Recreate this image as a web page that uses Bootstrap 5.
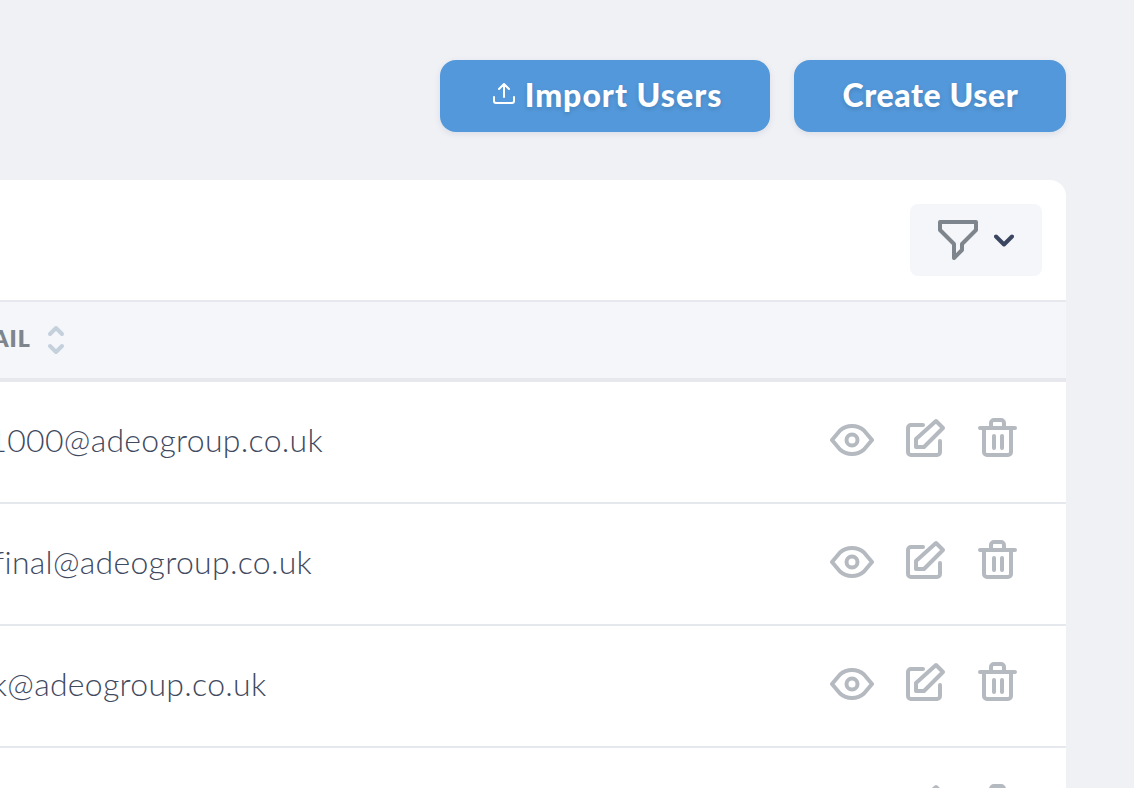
<!DOCTYPE html>
<html lang="en">
<head>
<meta charset="utf-8">
<title>Users</title>
<link rel="stylesheet" href="https://cdn.jsdelivr.net/npm/bootstrap@5.3.0/dist/css/bootstrap.min.css">
<style>
html,body{height:100%;overflow:hidden}
body{background:#f0f1f5;font-family:"Lato","Noto Sans",sans-serif}
.page-wrap{padding:60px 68px 0 0;height:788px;overflow:hidden}
.act-btn{height:72px;border-radius:16px;background:#5398da;border:0;color:#fff;font-weight:900;font-size:32px;letter-spacing:1px;line-height:1;text-shadow:0 2px 4px rgba(0,0,0,.15);box-shadow:0 2px 6px rgba(60,80,120,.12);display:flex;align-items:center;justify-content:center;padding:0 0 3px}
.act-btn:hover{background:#5398da;color:#fff}
.btn-import{width:330px;gap:10px;padding-left:5px}
.btn-import svg{margin-bottom:4px}
.btn-create{width:272px;letter-spacing:.6px;padding-left:1px}
.panel{margin-top:48px;margin-left:-300px;background:#fff;border:0;border-radius:0 16px 0 0;min-height:800px}
.panel-top{height:120px;padding:24px}
.filter-btn{width:132px;height:72px;background:#f5f6fa;border:0;border-radius:8px;padding:0 28px;gap:16px}
.user-tbl{margin:0;table-layout:fixed;width:100%;border-collapse:separate;border-spacing:0}
.user-tbl th{background:#f5f6fa;height:82px;border-top:2px solid #e6e8ee;border-bottom:4px solid #e6e8ee;padding:0 0 0 255px;vertical-align:middle;color:#7f858c;font-size:23px;font-weight:800;letter-spacing:1px}
.user-tbl td{height:122px;padding:0 0 0 228px;border-bottom:2px solid #e5e8ec;vertical-align:top;color:#3f4a5f;font-size:32px;font-weight:300;letter-spacing:.3px;line-height:116px}
.user-tbl .acts{width:300px;padding:36px 48px 0 0;line-height:1}
.sort-ic{margin-left:16px;margin-bottom:4px;vertical-align:middle}
.row-ic{gap:32px}
.ic-eye{margin-top:6px}
</style>
</head>
<body>
<div class="page-wrap">
  <div class="d-flex justify-content-end gap-4">
    <button type="button" class="btn act-btn btn-import">
      <svg width="22" height="22" viewBox="0 0 22 22" fill="none" stroke="#fff" stroke-width="2" stroke-linecap="round" stroke-linejoin="round"><path d="M11 15V2M6 7l5-5 5 5M1 15v4a2 2 0 0 0 2 2h16a2 2 0 0 0 2-2v-4"/></svg>
      <span>Import Users</span>
    </button>
    <button type="button" class="btn act-btn btn-create">Create User</button>
  </div>
  <div class="card panel">
    <div class="panel-top d-flex justify-content-end">
      <button type="button" class="btn filter-btn d-flex align-items-center">
        <svg width="40" height="40" viewBox="0 0 40 40" fill="none" stroke="#7f858c" stroke-width="4" stroke-linejoin="round" stroke-linecap="round" class="flex-shrink-0"><path d="M2 2H38V10L24 24V30L16 38V24L2 10Z"/></svg>
        <svg width="20" height="13" viewBox="0 0 20 13" fill="none" stroke="#3b4760" stroke-width="4" stroke-linecap="round" stroke-linejoin="round" class="flex-shrink-0"><path d="M2 2.500l8 8 8-8"/></svg>
      </button>
    </div>
    <table class="table user-tbl">
      <thead>
        <tr>
          <th>EMAIL<svg class="sort-ic" width="18" height="30" viewBox="0 0 18 30" fill="none" stroke="#c4d0dc" stroke-width="4" stroke-linecap="round" stroke-linejoin="round"><path d="M3 9l6-6 6 6M3 21l6 6 6-6"/></svg></th>
          <th class="acts"></th>
        </tr>
      </thead>
      <tbody>
        <tr><td>user1000@adeogroup.co.uk</td><td class="acts"><div class="d-flex justify-content-end row-ic">ICONS</div></td></tr>
        <tr><td>talesfinal@adeogroup.co.uk</td><td class="acts"><div class="d-flex justify-content-end row-ic">ICONS</div></td></tr>
        <tr><td>dorek@adeogroup.co.uk</td><td class="acts"><div class="d-flex justify-content-end row-ic">ICONS</div></td></tr>
        <tr><td>user@adeogroup.co.uk</td><td class="acts"><div class="d-flex justify-content-end row-ic">ICONS</div></td></tr>
      </tbody>
    </table>
  </div>
</div>
<script>
var icons='<svg class="ic-eye" width="44" height="32" viewBox="0 0 44 32" fill="none" stroke="#b5b9c0" stroke-width="4" stroke-linecap="round" stroke-linejoin="round"><path d="M2 16L10 6.500Q15 2 22 2T34 6.500L42 16L34 25.500Q29 30 22 30T10 25.500Z"/><circle cx="22" cy="16" r="5.500"/></svg>'+
'<svg width="40" height="40" viewBox="0 0 40 40" fill="none" stroke="#b5b9c0" stroke-width="4" stroke-linecap="round" stroke-linejoin="round"><path d="M17 7H5a3 3 0 0 0-3 3v24a3 3 0 0 0 3 3h26a3 3 0 0 0 3-3V23"/><path d="M10 21L30 3l7 7-19 19H10Z"/></svg>'+
'<svg width="40" height="40" viewBox="0 0 40 40" fill="none" stroke="#b5b9c0" stroke-width="4" stroke-linecap="round" stroke-linejoin="round"><path d="M2 10H37M13 9V5a3 3 0 0 1 3-3h7a3 3 0 0 1 3 3v4M6 10V34a3 3 0 0 0 3 3H30a3 3 0 0 0 3-3V10M16 18V30M24 18V30"/></svg>';
document.querySelectorAll('.row-ic').forEach(function(e){e.innerHTML=icons;});
</script>
<script src="https://cdn.jsdelivr.net/npm/bootstrap@5.3.0/dist/js/bootstrap.bundle.min.js"></script>
</body>
</html>
